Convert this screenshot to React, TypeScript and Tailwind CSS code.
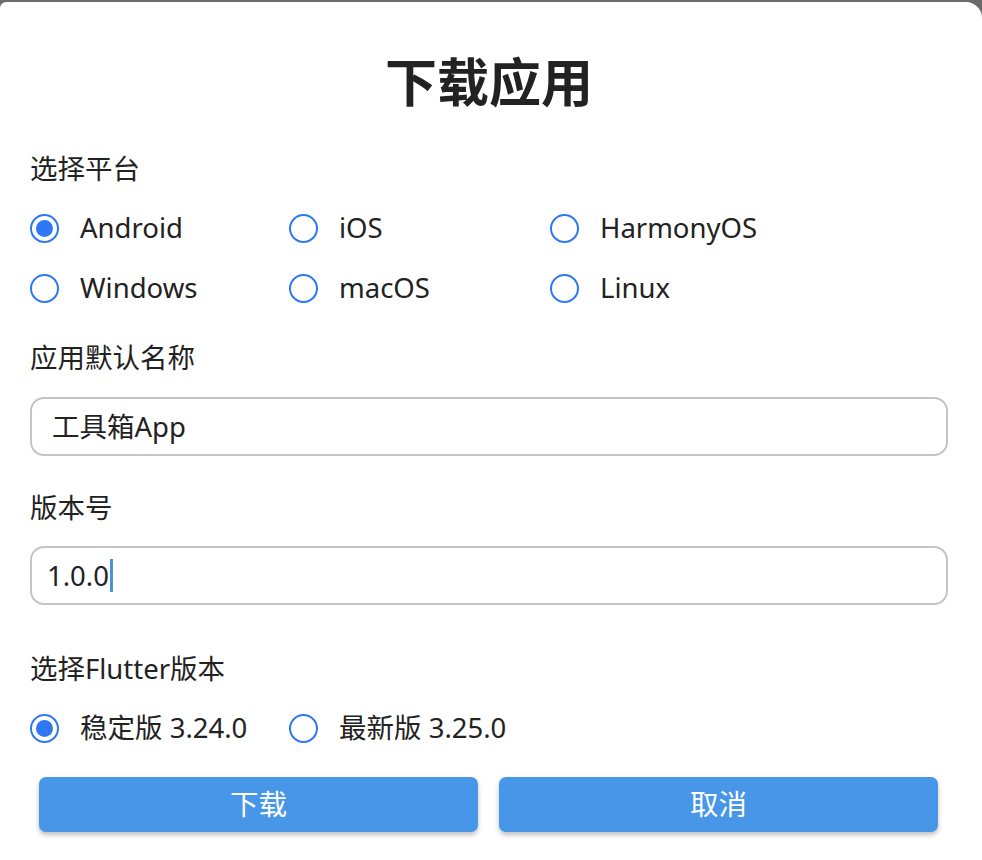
import React from "react";

const font = { fontFamily: '"Noto Sans", "Noto Sans CJK SC", sans-serif' };

function Radio({ checked, label }: { checked?: boolean; label: string }) {
  return (
    <div className="flex items-center h-[60px]">
      <div className="w-[29px] h-[29px] -ml-[0.5px] rounded-full border-[2.5px] border-[#2f78f4] flex items-center justify-center box-border">
        {checked && <div className="w-[17px] h-[17px] rounded-full bg-[#2f78f4]" />}
      </div>
      <span className="ml-[21.5px] text-[27.5px] text-[#222] leading-none">{label}</span>
    </div>
  );
}

export default function App() {
  return (
    <div className="w-[982px] h-[860px] bg-[#6b6b6b] pt-[2px] overflow-hidden" style={font}>
      <div className="w-full h-full bg-white rounded-tl-[6px] rounded-tr-[16px] pl-[30px] pr-[34px]">
        <h1 className="text-center text-[52px] font-bold text-[#222] leading-none pt-[54px] pb-[47px]">下载应用</h1>
        <div className="text-[27.5px] text-[#222] leading-none h-[27px] flex items-center">选择平台</div>
        <div className="grid grid-cols-[259px_261px_1fr] mt-[16px]">
          <Radio checked label="Android" />
          <Radio label="iOS" />
          <Radio label="HarmonyOS" />
          <Radio label="Windows" />
          <Radio label="macOS" />
          <Radio label="Linux" />
        </div>
        <div className="text-[27.5px] text-[#222] leading-none h-[27px] flex items-center mt-[26px]">应用默认名称</div>
        <div className="mt-[26px] h-[59px] border-2 border-[#c4c4c4] rounded-[14px] flex items-center pl-[20px] text-[27.5px] text-[#222]">
          工具箱App
        </div>
        <div className="text-[27.5px] text-[#222] leading-none h-[27px] flex items-center mt-[38px]">版本号</div>
        <div className="mt-[25px] h-[59px] border-2 border-[#c4c4c4] rounded-[14px] flex items-center pl-[15px] text-[27.5px] text-[#222]">
          <span>1.0.0</span>
          <span className="w-[3px] h-[33px] bg-[#4a90e2] ml-[1px]" />
        </div>
        <div className="text-[27.5px] text-[#222] leading-none h-[27px] flex items-center mt-[50px]">选择Flutter版本</div>
        <div className="grid grid-cols-[259px_1fr] mt-[16px]">
          <Radio checked label="稳定版 3.24.0" />
          <Radio label="最新版 3.25.0" />
        </div>
        <div className="flex gap-[21px] pl-[9px] pr-[10px] mt-[19px]">
          <button className="flex-1 h-[55px] rounded-[7px] bg-[#4896e8] text-white text-[28.5px] shadow-[0_3px_5px_rgba(0,0,0,0.25)] flex items-center justify-center">下载</button>
          <button className="flex-1 h-[55px] rounded-[7px] bg-[#4896e8] text-white text-[28.5px] shadow-[0_3px_5px_rgba(0,0,0,0.25)] flex items-center justify-center">取消</button>
        </div>
      </div>
    </div>
  );
}
